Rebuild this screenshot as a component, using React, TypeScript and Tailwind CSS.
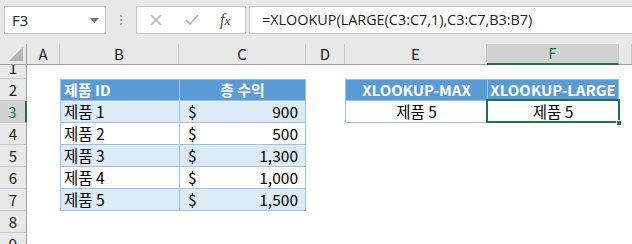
import React from "react";

const COLS = [27, 33, 119, 127, 39, 142, 132, 13];
const LETTERS = ["A", "B", "C", "D", "E", "F", ""];
const font = { fontFamily: '"Noto Sans CJK KR", "Noto Sans", sans-serif' };

function RowHeader({ n, h, sel, clipTop }: { n: number; h: number; sel?: boolean; clipTop?: boolean }) {
  return (
    <div
      className={`shrink-0 flex justify-center overflow-hidden border-b border-[#c8c8c8] text-[15px] ${
        sel ? "bg-[#d2d2d2] text-[#217346] border-r-2 border-r-[#217346]" : "bg-[#e8e8e8] text-[#222] border-r border-r-[#9f9f9f]"
      } ${clipTop ? "items-end" : "items-start"}`}
      style={{ width: COLS[0], height: h }}
    >
      <span className="leading-[21px] block h-[21px]">{n}</span>
    </div>
  );
}

const TB = "border-[#9bc2e6]";

export default function App() {
  const data = [
    ["제품 1", "900"],
    ["제품 2", "500"],
    ["제품 3", "1,300"],
    ["제품 4", "1,000"],
    ["제품 5", "1,500"],
  ];
  return (
    <div className="w-[632px] h-[244px] overflow-hidden bg-white relative" style={font}>
      {/* toolbar */}
      <div className="h-[44px] bg-[#e8e8e8] flex items-start pt-[6px] pl-[4px]">
        <div className="w-[102px] h-[28px] bg-white border border-[#c6c6c6] flex items-center justify-between pl-[7px] pr-[6px]">
          <span className="text-[15px] text-[#222]" style={{ fontFamily: '"Open Sans", sans-serif' }}>F3</span>
          <svg width="9" height="5" viewBox="0 0 9 5"><path d="M0 0 H9 L4.5 5 Z" fill="#777" /></svg>
        </div>
        <div className="w-[30px] h-[28px] flex flex-col items-center justify-center gap-[2px]">
          <div className="w-[2px] h-[2px] bg-[#a0a0a0]" />
          <div className="w-[2px] h-[2px] bg-[#a0a0a0]" />
          <div className="w-[2px] h-[2px] bg-[#a0a0a0]" />
        </div>
        <div className="w-[110px] h-[28px] bg-white border border-[#c6c6c6] flex items-center">
          <svg className="ml-[13px]" width="12" height="12" viewBox="0 0 12 12">
            <path d="M1 1 L11 11 M11 1 L1 11" stroke="#b4b4b4" strokeWidth="1.6" />
          </svg>
          <svg className="ml-[23px]" width="14" height="12" viewBox="0 0 14 12">
            <path d="M1 6 L5 10 L13 1" stroke="#b4b4b4" strokeWidth="1.8" fill="none" />
          </svg>
          <span className="ml-[21px] text-[16px] italic text-[#444] leading-none" style={{ fontFamily: '"Liberation Serif", serif' }}>
            f<span className="text-[13px]">x</span>
          </span>
        </div>
        <div className="ml-[3px] flex-1 h-[28px] bg-white border border-[#c6c6c6] border-r-0 flex items-center pl-[12px]">
          <span className="text-[14.4px] text-[#222]" style={{ fontFamily: '"Open Sans", sans-serif' }}>
            =XLOOKUP(LARGE(C3:C7,1),C3:C7,B3:B7)
          </span>
        </div>
      </div>

      {/* column headers */}
      <div className="flex h-[21px] bg-[#e8e8e8] border-b border-[#9f9f9f]">
        <div className="shrink-0 relative border-r border-[#9f9f9f]" style={{ width: COLS[0] }}>
          <svg className="absolute right-[3px] bottom-[3px]" width="14" height="14" viewBox="0 0 14 14">
            <path d="M14 0 L14 14 L0 14 Z" fill="#b4b4b4" />
          </svg>
        </div>
        {LETTERS.map((l, i) => (
          <div
            key={i}
            className={`shrink-0 flex items-center justify-center text-[15px] border-r border-[#c8c8c8] ${
              l === "F" ? "bg-[#d2d2d2] text-[#217346] border-b-2 border-b-[#217346] -mb-px" : "text-[#222]"
            }`}
            style={{ width: COLS[i + 1] }}
          >
            {l}
          </div>
        ))}
      </div>

      {/* row 1 */}
      <div className="flex">
        <RowHeader n={1} h={14} clipTop />
      </div>

      {/* row 2 */}
      <div className="flex h-[22px] text-[15px]">
        <RowHeader n={2} h={22} />
        <div className="shrink-0" style={{ width: COLS[1] }} />
        <div className={`shrink-0 bg-[#5b9bd5] text-white font-bold border ${TB} border-r-0 pl-[3px] flex items-center`} style={{ width: COLS[2] }}>
          제품 ID
        </div>
        <div className={`shrink-0 bg-[#5b9bd5] text-white font-bold border ${TB} flex items-center justify-center`} style={{ width: COLS[3] }}>
          총 수익
        </div>
        <div className="shrink-0" style={{ width: COLS[4] }} />
        <div className={`shrink-0 bg-[#5b9bd5] text-white font-bold border ${TB} border-r-0 flex items-center justify-center`} style={{ width: COLS[5] }}>
          XLOOKUP-MAX
        </div>
        <div className={`shrink-0 bg-[#5b9bd5] text-white font-bold border ${TB} flex items-center justify-center whitespace-nowrap`} style={{ width: COLS[6] }}>
          XLOOKUP-LARGE
        </div>
      </div>

      {/* rows 3-7 */}
      {data.map(([name, val], idx) => {
        const r = idx + 3;
        const bg = idx % 2 === 0 ? "bg-[#ddebf7]" : "bg-white";
        return (
          <div key={r} className="flex h-[22px] text-[15.5px] text-black">
            <RowHeader n={r} h={22} sel={r === 3} />
            <div className="shrink-0" style={{ width: COLS[1] }} />
            <div className={`shrink-0 ${bg} border-l border-b ${TB} pl-[3px] flex items-center`} style={{ width: COLS[2] }}>
              {name}
            </div>
            <div className={`shrink-0 ${bg} border-l border-r border-b ${TB} flex items-center justify-between pl-[8px] pr-[7px]`} style={{ width: COLS[3] }}>
              <span>$</span>
              <span>{val}</span>
            </div>
            <div className="shrink-0" style={{ width: COLS[4] }} />
            {r === 3 && (
              <>
                <div className={`shrink-0 border-l border-b ${TB} flex items-center justify-center`} style={{ width: COLS[5] }}>
                  제품 5
                </div>
                <div className={`shrink-0 relative border-l border-r border-b ${TB} flex items-center justify-center`} style={{ width: COLS[6] }}>
                  제품 5
                  <div className="absolute -left-[2px] -top-[2px] -right-[2px] -bottom-[1px] border-2 border-[#217346]" />
                  <div className="absolute -right-[4px] -bottom-[4px] w-[6px] h-[6px] bg-[#217346] border border-white" />
                </div>
              </>
            )}
          </div>
        );
      })}

      {/* rows 8-9 */}
      <div className="flex">
        <RowHeader n={8} h={22} />
      </div>
      <div className="flex">
        <RowHeader n={9} h={22} />
      </div>
    </div>
  );
}
